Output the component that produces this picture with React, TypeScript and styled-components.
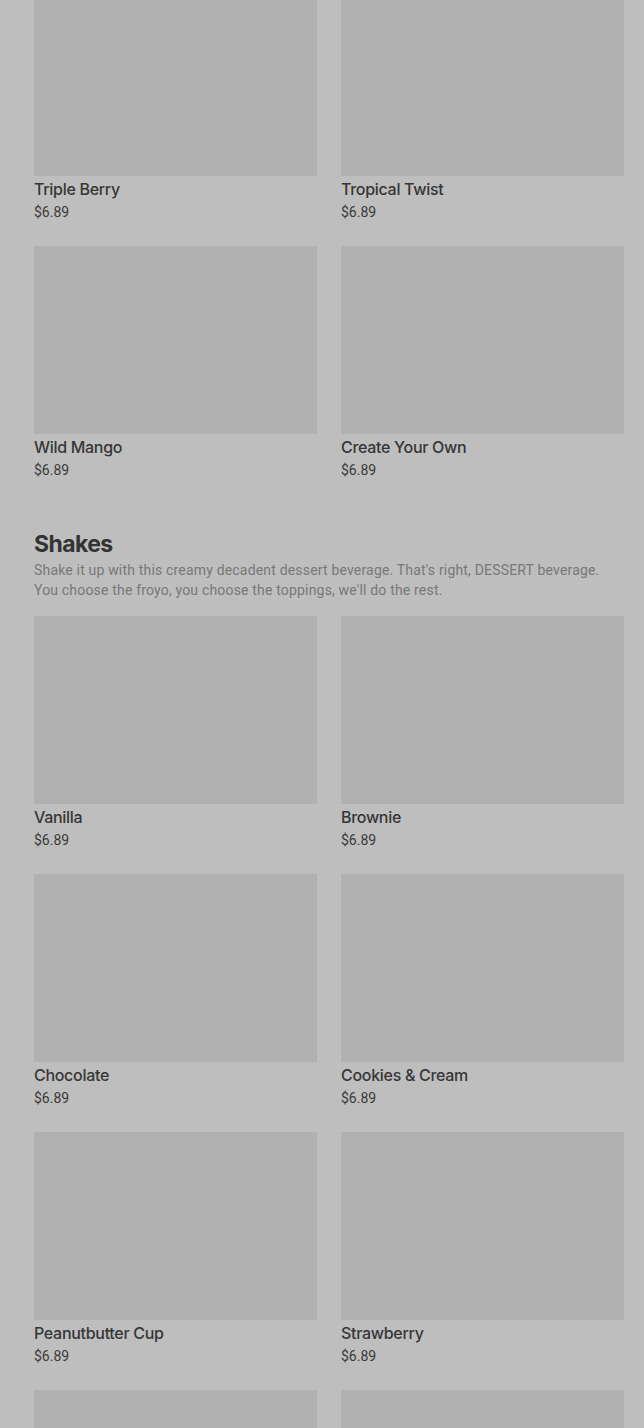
import React from "react";
import styled, { createGlobalStyle } from "styled-components";

const Global = createGlobalStyle`
  html, body { margin: 0; padding: 0; background: #bebebe; }
  body { font-family: Roboto, "Liberation Sans", sans-serif; overflow: hidden; }
`;

const Page = styled.div`
  padding: 0 20px 0 34px;
  margin-top: -12px;
`;

const Section = styled.section`
  display: flex;
  flex-direction: column;
`;

const Heading = styled.h2`
  margin: 48px 0 0;
  font-family: Inter, Roboto, sans-serif;
  font-size: 23px;
  font-weight: 700;
  line-height: 32px;
  letter-spacing: -0.6px;
  color: #333333;
`;

const Description = styled.p`
  margin: 0 0 16px;
  font-size: 14px;
  line-height: 20px;
  letter-spacing: 0.18px;
  color: #787878;
`;

const Grid = styled.div`
  display: grid;
  grid-template-columns: 283px 283px;
  column-gap: 24px;
  row-gap: 24px;
`;

const Card = styled.div`
  display: flex;
  flex-direction: column;
`;

const Thumb = styled.div`
  height: 188px;
  background: #b1b1b1;
`;

const Title = styled.div`
  margin-top: 1px;
  font-family: Inter, Roboto, sans-serif;
  font-size: 16px;
  font-weight: 500;
  line-height: 24px;
  color: #363636;
  letter-spacing: -0.3px;
`;

const Price = styled.div`
  margin-top: 1px;
  font-size: 14px;
  line-height: 20px;
  color: #3a3a3a;
`;

type Item = { name?: string; price?: string };

const froyo: Item[] = [
  { name: "Triple Berry", price: "$6.89" },
  { name: "Tropical Twist", price: "$6.89" },
  { name: "Wild Mango", price: "$6.89" },
  { name: "Create Your Own", price: "$6.89" },
];

const shakes: Item[] = [
  { name: "Vanilla", price: "$6.89" },
  { name: "Brownie", price: "$6.89" },
  { name: "Chocolate", price: "$6.89" },
  { name: "Cookies & Cream", price: "$6.89" },
  { name: "Peanutbutter Cup", price: "$6.89" },
  { name: "Strawberry", price: "$6.89" },
  {},
  {},
];

const Items = ({ items }: { items: Item[] }) => (
  <Grid>
    {items.map((it, i) => (
      <Card key={i}>
        <Thumb />
        {it.name && <Title>{it.name}</Title>}
        {it.price && <Price>{it.price}</Price>}
      </Card>
    ))}
  </Grid>
);

export default function App() {
  return (
    <>
      <Global />
      <Page>
        <Section>
          <Items items={froyo} />
        </Section>
        <Section>
          <Heading>Shakes</Heading>
          <Description>
            Shake it up with this creamy decadent dessert beverage. That's right, DESSERT beverage.
            <br />
            You choose the froyo, you choose the toppings, we'll do the rest.
          </Description>
          <Items items={shakes} />
        </Section>
      </Page>
    </>
  );
}
